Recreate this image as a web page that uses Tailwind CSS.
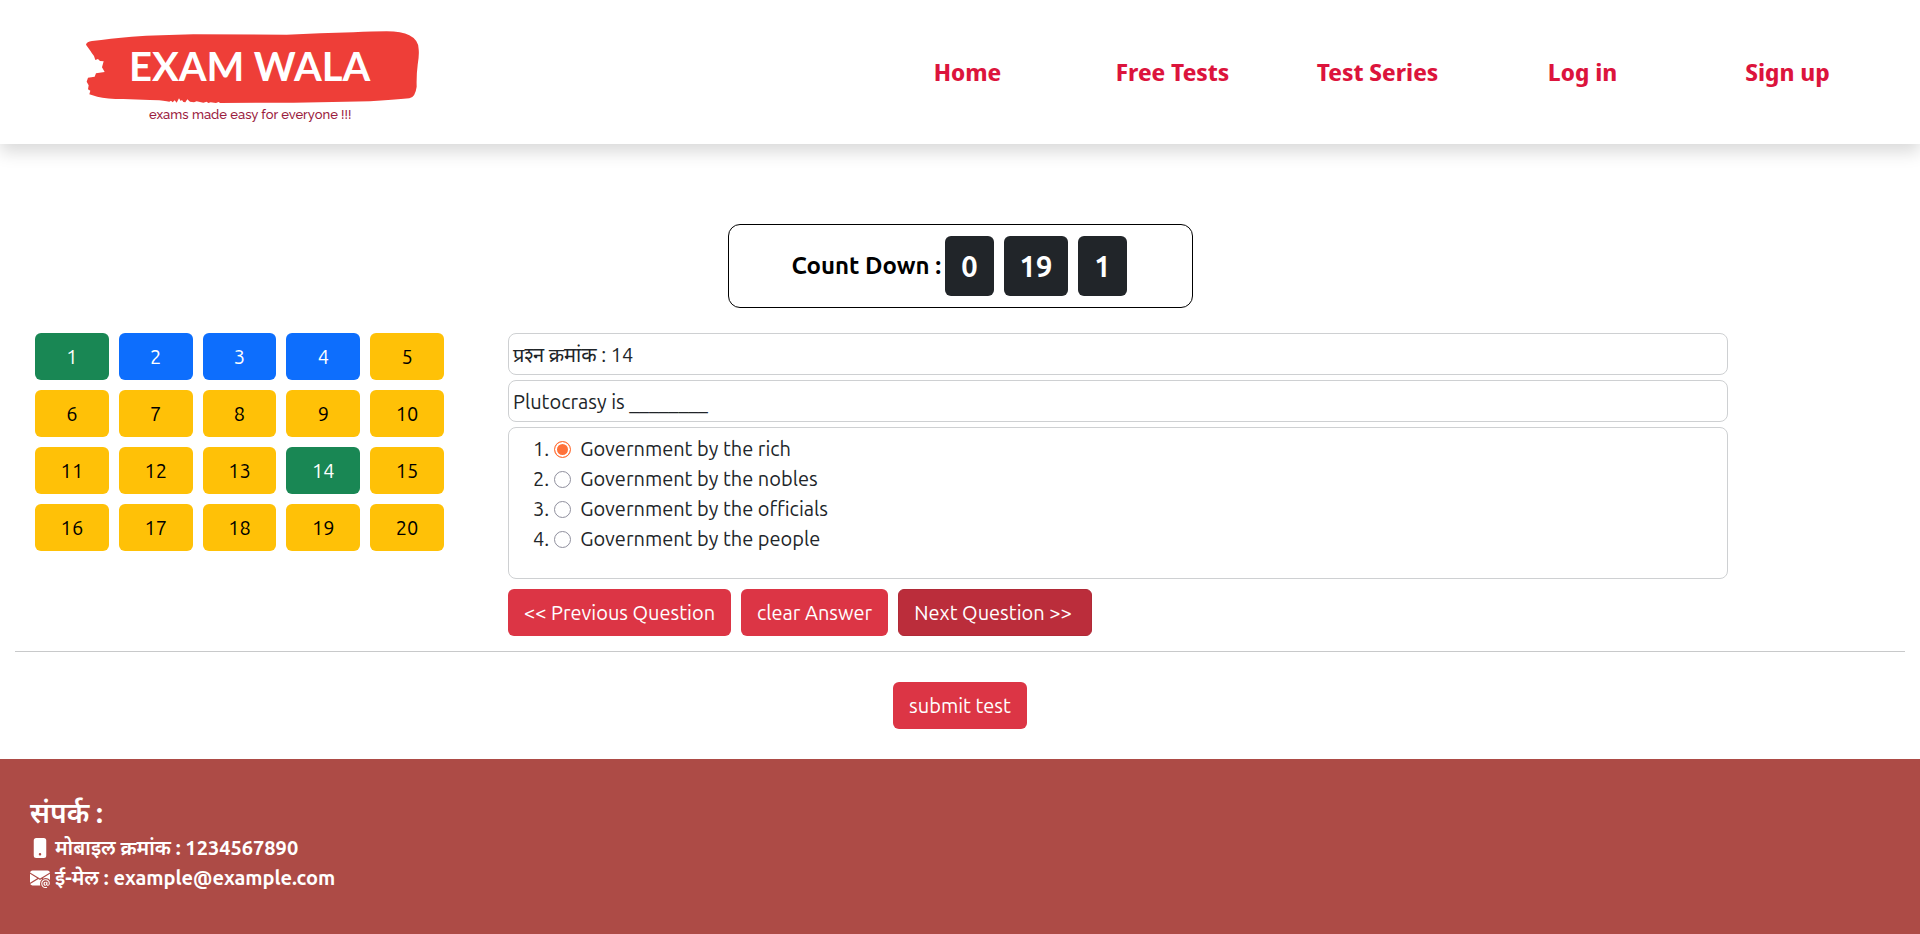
<!DOCTYPE html>
<html lang="mr">
<head>
<meta charset="utf-8">
<meta name="viewport" content="width=device-width, initial-scale=1">
<title>Exam Wala</title>
<script src="https://cdn.jsdelivr.net/npm/@tailwindcss/browser@4"></script>
</head>
<body class="flex min-h-screen flex-col bg-white font-['Ubuntu','Noto_Sans',sans-serif] text-[20px] leading-[30px] text-[#212529]">

<header class="flex h-36 items-center bg-white pr-[30px] pl-20 shadow-[0_8px_16px_rgba(0,0,0,0.15)]">
  <a href="#" aria-label="Exam Wala">
    <svg class="h-[100px] w-[344px]" viewBox="80 22 344 100">
      <path transform="translate(60 10) scale(.33333)" fill="#ee3e38" d="M78 104Q80 95 96 93Q150 86 215 80Q300 75 400 73L680 74Q780 70 880 67Q940 64 980 64Q1025 64 1048 76Q1076 90 1076 118Q1078 135 1073 165Q1069 195 1070 230Q1066 262 1048 265Q1000 269 930 274Q820 277 700 278L480 279L476 276L468 279L452 277L445 279L440 275L430 278L410 274L402 277L390 275L382 268L376 277L370 276L366 270L362 273L357 265L350 278L344 271L338 277L333 272L328 275L320 274Q300 270 270 270L190 267Q140 267 112 260L88 253L91 242L84 238L86 226L80 215L84 203L104 200L108 190L134 186L126 172L131 154L120 153L114 147L106 150L102 138Q95 130 92 124Z"/>
      <text x="129" y="81" fill="#fff" class="font-['Lato'] text-[40px] font-bold">EXAM WALA</text>
      <text x="149" y="119" fill="#9b1c40" class="font-['Raleway','Lato'] text-[13px] font-medium">exams made easy for everyone !!!</text>
    </svg>
  </a>
  <nav class="ml-auto grid w-[1025px] grid-cols-5 text-center font-['Noto_Sans_Display','Open_Sans'] text-[24px] font-bold text-[#dc143c]">
    <a href="#">Home</a>
    <a href="#">Free Tests</a>
    <a href="#">Test Series</a>
    <a href="#">Log in</a>
    <a href="#">Sign up</a>
  </nav>
</header>

<main class="pt-20">
  <section class="mx-auto flex h-[84px] w-[465px] items-center justify-center rounded-xl border border-black pr-0.5 font-bold text-black">
    <span class="mr-1 text-[24px]">Count Down :</span>
    <div class="flex gap-2.5 text-[29px] text-white">
      <span class="flex h-[60px] items-center rounded-md bg-[#212529] px-4">0</span>
      <span class="flex h-[60px] items-center rounded-md bg-[#212529] px-4">19</span>
      <span class="flex h-[60px] items-center rounded-md bg-[#212529] px-4">1</span>
    </div>
  </section>

  <div class="mt-[25px] flex">
    <aside class="w-1/4 pr-9 pl-[35px]">
      <div class="grid grid-cols-5 gap-2.5 text-black">
        <button class="h-[47px] rounded-md bg-[#198754] text-white">1</button>
        <button class="h-[47px] rounded-md bg-[#0d6efd] text-white">2</button>
        <button class="h-[47px] rounded-md bg-[#0d6efd] text-white">3</button>
        <button class="h-[47px] rounded-md bg-[#0d6efd] text-white">4</button>
        <button class="h-[47px] rounded-md bg-[#ffc107]">5</button>
        <button class="h-[47px] rounded-md bg-[#ffc107]">6</button>
        <button class="h-[47px] rounded-md bg-[#ffc107]">7</button>
        <button class="h-[47px] rounded-md bg-[#ffc107]">8</button>
        <button class="h-[47px] rounded-md bg-[#ffc107]">9</button>
        <button class="h-[47px] rounded-md bg-[#ffc107]">10</button>
        <button class="h-[47px] rounded-md bg-[#ffc107]">11</button>
        <button class="h-[47px] rounded-md bg-[#ffc107]">12</button>
        <button class="h-[47px] rounded-md bg-[#ffc107]">13</button>
        <button class="h-[47px] rounded-md bg-[#198754] text-white">14</button>
        <button class="h-[47px] rounded-md bg-[#ffc107]">15</button>
        <button class="h-[47px] rounded-md bg-[#ffc107]">16</button>
        <button class="h-[47px] rounded-md bg-[#ffc107]">17</button>
        <button class="h-[47px] rounded-md bg-[#ffc107]">18</button>
        <button class="h-[47px] rounded-md bg-[#ffc107]">19</button>
        <button class="h-[47px] rounded-md bg-[#ffc107]">20</button>
      </div>
    </aside>

    <section class="w-3/4 pr-48 pl-7">
      <div class="flex flex-col gap-[5px]">
        <div class="rounded-lg border border-[#ced0d2] px-1 pt-[6px] pb-1">प्रश्&zwj;न क्रमांक : 14</div>
        <div class="rounded-lg border border-[#ced0d2] px-1 pt-[6px] pb-1">Plutocrasy is ________</div>
        <ol class="rounded-lg border border-[#ced0d2] pt-[6px] pb-6 pl-6">
          <li><label class="flex items-center"><span class="mr-[5px]">1.</span><input type="radio" name="answer" checked class="mr-[9px] size-[17px] appearance-none rounded-full border border-[#8f8f9d] checked:border-[#ff7139] checked:bg-[#ff7139] checked:shadow-[inset_0_0_0_2px_#fff]">Government by the rich</label></li>
          <li><label class="flex items-center"><span class="mr-[5px]">2.</span><input type="radio" name="answer" class="mr-[9px] size-[17px] appearance-none rounded-full border border-[#8f8f9d] checked:border-[#ff7139] checked:bg-[#ff7139] checked:shadow-[inset_0_0_0_2px_#fff]">Government by the nobles</label></li>
          <li><label class="flex items-center"><span class="mr-[5px]">3.</span><input type="radio" name="answer" class="mr-[9px] size-[17px] appearance-none rounded-full border border-[#8f8f9d] checked:border-[#ff7139] checked:bg-[#ff7139] checked:shadow-[inset_0_0_0_2px_#fff]">Government by the officials</label></li>
          <li><label class="flex items-center"><span class="mr-[5px]">4.</span><input type="radio" name="answer" class="mr-[9px] size-[17px] appearance-none rounded-full border border-[#8f8f9d] checked:border-[#ff7139] checked:bg-[#ff7139] checked:shadow-[inset_0_0_0_2px_#fff]">Government by the people</label></li>
        </ol>
      </div>
      <div class="mt-2.5 flex gap-2.5 text-white">
        <button class="h-[47px] w-[223px] rounded-md bg-[#dc3545]">&lt;&lt; Previous Question</button>
        <button class="h-[47px] w-[147px] rounded-md bg-[#dc3545]">clear Answer</button>
        <button class="h-[47px] w-[194px] rounded-md border border-[#b02a37] bg-[#bb2d3b] pr-1">Next Question &gt;&gt;</button>
      </div>
    </section>
  </div>

  <hr class="mx-[15px] mt-[15px] border-[#c8c9ca]">
  <div class="flex justify-center pt-[30px] pb-[30px]">
    <button class="h-[47px] w-[134px] rounded-md bg-[#dc3545] text-white">submit test</button>
  </div>
</main>

<footer class="grow bg-[#ad4b46] px-[30px] pt-9 font-semibold text-white">
  <h2 class="mb-0.5 text-[28px] leading-9">संपर्क :</h2>
  <p class="flex items-center gap-[5px]">
    <svg class="size-5" viewBox="0 0 16 16" fill="currentColor" aria-hidden="true"><path d="M3 2a2 2 0 0 1 2-2h6a2 2 0 0 1 2 2v12a2 2 0 0 1-2 2H5a2 2 0 0 1-2-2V2zm6 11a1 1 0 1 0-2 0 1 1 0 0 0 2 0z"/></svg>
    <span>मोबाइल क्रमांक : 1234567890</span>
  </p>
  <p class="flex items-center gap-[5px]">
    <svg class="size-5" viewBox="0 0 16 16" fill="currentColor" aria-hidden="true"><path d="M2 2A2 2 0 0 0 .05 3.555L8 8.414l7.95-4.859A2 2 0 0 0 14 2H2Zm-2 9.8V4.698l5.803 3.546L0 11.801Zm6.761-2.97-6.57 4.026A2 2 0 0 0 2 14h6.256A4.493 4.493 0 0 1 8 12.5a4.49 4.49 0 0 1 1.606-3.446l-.367-.225L8 9.586l-1.239-.757ZM16 9.671V4.697l-5.803 3.546.338.208A4.482 4.482 0 0 1 12.5 8c1.414 0 2.675.652 3.5 1.671Z"/><path d="M15.834 12.244c0 1.168-.577 2.025-1.587 2.025-.503 0-1.002-.228-1.12-.648h-.043c-.118.416-.543.643-1.015.643-.77 0-1.259-.542-1.259-1.434v-.529c0-.844.481-1.4 1.26-1.4.585 0 .87.333.953.63h.03v-.568h.905v2.19c0 .272.18.42.411.42.315 0 .639-.415.639-1.39v-.118c0-1.277-.95-2.326-2.484-2.326h-.04c-1.582 0-2.64 1.067-2.64 2.724v.157c0 1.867 1.237 2.654 2.57 2.654h.045c.507 0 .935-.07 1.18-.18v.731c-.219.1-.643.175-1.237.175h-.044C10.438 16 9 14.82 9 12.646v-.214C9 10.36 10.421 9 12.485 9h.035c2.12 0 3.314 1.43 3.314 3.034v.21Zm-4.04.21v.227c0 .586.227.8.581.8.31 0 .564-.17.564-.743v-.367c0-.516-.275-.708-.572-.708-.346 0-.573.245-.573.791Z"/></svg>
    <span>ई-मेल : example@example.com</span>
  </p>
</footer>
</body>
</html>
